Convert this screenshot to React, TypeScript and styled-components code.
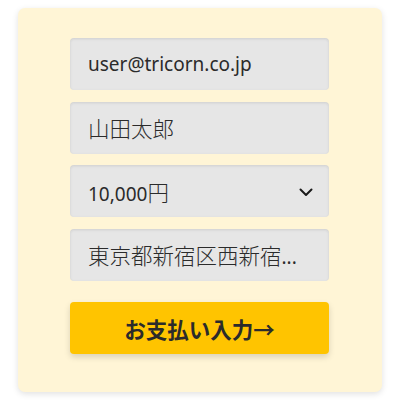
import React from "react";
import styled, { createGlobalStyle } from "styled-components";

const Global = createGlobalStyle`
  html, body { margin: 0; padding: 0; background: #ffffff; }
  body { font-family: "Noto Sans", "Noto Sans CJK JP", sans-serif; }
  * { box-sizing: border-box; }
`;

const Page = styled.div`
  width: 400px;
  height: 400px;
  padding: 8px 18px;
`;

const Card = styled.div`
  width: 364px;
  height: 384px;
  background: #fff5d6;
  border-radius: 7px;
  box-shadow: 0 2px 6px rgba(0, 0, 0, 0.12);
  padding: 30px 53px 0 52px;
  display: flex;
  flex-direction: column;
  gap: 11.5px;
`;

const Field = styled.div`
  height: 52px;
  flex: none;
  background: #e6e6e6;
  border-radius: 4px;
  box-shadow: inset 0 1px 3px rgba(0, 0, 0, 0.1);
  display: flex;
  align-items: center;
  justify-content: space-between;
  padding: 0 16px 0 18px;
  font-family: "Noto Sans", "Noto Sans CJK JP", sans-serif;
  font-size: 19px;
  color: #2b2b2b;
  white-space: nowrap;
  overflow: hidden;
`;

const Jp = styled.span`
  font-family: "Noto Sans CJK JP", sans-serif;
  font-size: 21.5px;
  font-weight: 300;
`;

const Chevron = styled.svg`
  width: 14px;
  height: 14px;
`;

const Button = styled.button`
  margin-top: 10px;
  height: 52px;
  flex: none;
  border: none;
  border-radius: 4px;
  background: #ffc400;
  box-shadow: 0 3px 6px rgba(0, 0, 0, 0.15);
  font-family: "Noto Sans CJK JP", sans-serif;
  font-weight: 700;
  font-size: 21.5px;
  color: #2b2b2b;
  cursor: pointer;
`;

export default function App() {
  return (
    <>
      <Global />
      <Page>
        <Card>
          <Field>user@tricorn.co.jp</Field>
          <Field>
            <Jp>山田太郎</Jp>
          </Field>
          <Field>
            <span>
              10,000<Jp>円</Jp>
            </span>
            <Chevron viewBox="0 0 14 14" fill="none">
              <path d="M1.5 5.5 L7 11 L12.5 5.5" stroke="#1a1a1a" strokeWidth="2" strokeLinecap="round" strokeLinejoin="round" />
            </Chevron>
          </Field>
          <Field>
            <span>
              <Jp>東京都新宿区西新宿</Jp>...
            </span>
          </Field>
          <Button>お支払い入力→</Button>
        </Card>
      </Page>
    </>
  );
}
